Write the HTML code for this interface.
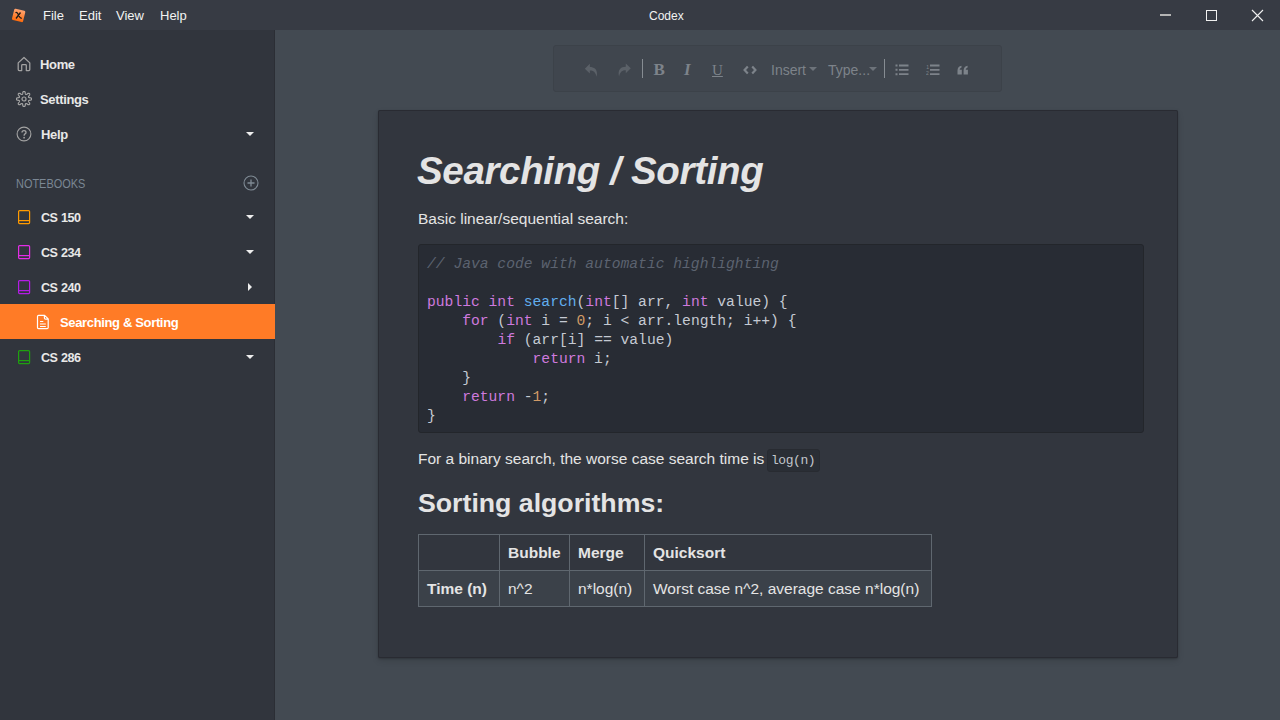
<!DOCTYPE html>
<html><head><meta charset="utf-8">
<style>
*{margin:0;padding:0;box-sizing:border-box}
html,body{width:1280px;height:720px;overflow:hidden;background:#434a52;font-family:"Liberation Sans",sans-serif}
.abs{position:absolute;white-space:nowrap}
#title{position:absolute;left:0;top:0;width:1280px;height:30px;background:#373b44}
#title .m{position:absolute;top:9px;font-size:13px;color:#f2f2f2;line-height:14px}
#side{position:absolute;left:0;top:30px;width:275px;height:690px;background:#31353d;border-right:1px solid #2b2e35}
.si{position:absolute;left:0;width:274px;height:35px}
.si .t{position:absolute;left:40px;top:10px;font-size:13px;font-weight:bold;color:#e8e8e8;line-height:15px}
.si svg{position:absolute}
.caret{position:absolute;left:246px;top:15px;width:0;height:0;border-left:4px solid transparent;border-right:4px solid transparent;border-top:4px solid #eee}
#main{position:absolute;left:275px;top:30px;width:1005px;height:690px;background:#434a52}
#tb{position:absolute;left:553px;top:45px;width:449px;height:47px;background:#40464e;border-radius:3px;border:1px solid #3c4249}
#page{position:absolute;left:378px;top:110px;width:800px;height:548px;background:#32363e;border-radius:2px;box-shadow:inset 0 0 0 1px rgba(30,32,36,.45),0 1px 2px rgba(0,0,0,.2),0 3px 6px rgba(0,0,0,.12)}
.txt{color:#e6e6e6}

.tbt{color:#7d838a;line-height:18px}
.code{white-space:pre !important;font-family:"Liberation Mono",monospace;font-size:14.67px;line-height:19px;color:#c5cad3}
.code .cm{color:#5c6370;font-style:italic}
.code .kw{color:#cf7ade}
.code .fn{color:#61aeee}
.code .nu{color:#d19a66}
.tbl{border-collapse:collapse;color:#e4e4e4;font-size:15.5px}
.tbl td,.tbl th{border:1px solid #5f676f;height:36px;padding:0 8px;text-align:left;white-space:nowrap}
.tbl th{font-weight:bold}
.tbl .r2{background:#3b4149}
.st{font-size:13px;font-weight:bold;color:#e8e8e8;line-height:15px;letter-spacing:-0.35px}
.cs{letter-spacing:-0.5px;font-size:12.6px;word-spacing:0.5px}
</style></head><body>
<div id="title">
  <svg class="abs" style="left:9.8px;top:6.6px" width="17" height="17" viewBox="0 0 17 17">
    <defs><linearGradient id="lg" x1="0" y1="0" x2="0" y2="1"><stop offset="0" stop-color="#ffa370"/><stop offset="1" stop-color="#ff6a0a"/></linearGradient></defs>
    <rect x="2.9" y="2.6" width="11.4" height="11.6" rx="1.3" fill="url(#lg)" transform="rotate(14 8.5 8.5)"/>
    <path d="M5.5 5.8 C6.5 5 7 5.5 8 7 L9.5 9.8 C10.3 11.2 10.8 11.5 11.8 11 M10.5 5.5 L6 11.5" stroke="#1a1a1a" stroke-width="1.3" fill="none"/>
  </svg>
  <div class="m" style="left:43px">File</div>
  <div class="m" style="left:79px">Edit</div>
  <div class="m" style="left:116px">View</div>
  <div class="m" style="left:160px">Help</div>
  <div class="m" style="left:649px;font-size:12px;top:9px">Codex</div>
  <div class="abs" style="left:1160px;top:14px;width:11px;height:2px;background:#b4b4b4"></div>
  <div class="abs" style="left:1206px;top:10px;width:11px;height:11px;border:1px solid #f0f0f0"></div>
  <svg class="abs" style="left:1251px;top:9px" width="13" height="13" viewBox="0 0 13 13"><path d="M1 1L12 12M12 1L1 12" stroke="#f0f0f0" stroke-width="1.1"/></svg>
</div>

<div id="side"></div>

<!-- Home -->
<svg class="abs" style="left:16px;top:56px" width="16" height="16" viewBox="0 0 16 16"><path d="M2.2 13.6 V6.9 L8 1.5 L13.8 6.9 V13.6 Q13.8 14.6 12.8 14.6 H10.3 V9.4 Q10.3 8.6 9.5 8.6 H6.5 Q5.7 8.6 5.7 9.4 V14.6 H3.2 Q2.2 14.6 2.2 13.6 Z" fill="none" stroke="#a3a3a3" stroke-width="1.25" stroke-linejoin="round"/></svg>
<div class="abs st" style="left:40px;top:57px">Home</div>
<!-- Settings -->
<svg class="abs" style="left:16px;top:91px" width="16" height="16" viewBox="0 0 16 16"><path d="M8.00 0.30 L8.20 0.32 L8.40 0.40 L8.59 0.52 L8.77 0.68 L8.93 0.90 L9.08 1.17 L9.20 1.52 L9.25 2.12 L9.33 2.47 L9.41 2.75 L9.49 2.97 L9.57 3.16 L9.66 3.30 L9.76 3.41 L9.88 3.47 L10.00 3.50 L10.15 3.50 L10.31 3.46 L10.50 3.39 L10.72 3.29 L10.97 3.15 L11.27 2.96 L11.73 2.57 L12.06 2.41 L12.36 2.32 L12.63 2.28 L12.88 2.29 L13.09 2.34 L13.29 2.43 L13.44 2.56 L13.57 2.71 L13.66 2.91 L13.71 3.12 L13.72 3.37 L13.68 3.64 L13.59 3.94 L13.43 4.27 L13.04 4.73 L12.85 5.03 L12.71 5.28 L12.61 5.50 L12.54 5.69 L12.50 5.85 L12.50 6.00 L12.53 6.12 L12.59 6.24 L12.70 6.34 L12.84 6.43 L13.03 6.51 L13.25 6.59 L13.53 6.67 L13.88 6.75 L14.48 6.80 L14.83 6.92 L15.10 7.07 L15.32 7.23 L15.48 7.41 L15.60 7.60 L15.68 7.80 L15.70 8.00 L15.68 8.20 L15.60 8.40 L15.48 8.59 L15.32 8.77 L15.10 8.93 L14.83 9.08 L14.48 9.20 L13.88 9.25 L13.53 9.33 L13.25 9.41 L13.03 9.49 L12.84 9.57 L12.70 9.66 L12.59 9.76 L12.53 9.88 L12.50 10.00 L12.50 10.15 L12.54 10.31 L12.61 10.50 L12.71 10.72 L12.85 10.97 L13.04 11.27 L13.43 11.73 L13.59 12.06 L13.68 12.36 L13.72 12.63 L13.71 12.88 L13.66 13.09 L13.57 13.29 L13.44 13.44 L13.29 13.57 L13.09 13.66 L12.88 13.71 L12.63 13.72 L12.36 13.68 L12.06 13.59 L11.73 13.43 L11.27 13.04 L10.97 12.85 L10.72 12.71 L10.50 12.61 L10.31 12.54 L10.15 12.50 L10.00 12.50 L9.88 12.53 L9.76 12.59 L9.66 12.70 L9.57 12.84 L9.49 13.03 L9.41 13.25 L9.33 13.53 L9.25 13.88 L9.20 14.48 L9.08 14.83 L8.93 15.10 L8.77 15.32 L8.59 15.48 L8.40 15.60 L8.20 15.68 L8.00 15.70 L7.80 15.68 L7.60 15.60 L7.41 15.48 L7.23 15.32 L7.07 15.10 L6.92 14.83 L6.80 14.48 L6.75 13.88 L6.67 13.53 L6.59 13.25 L6.51 13.03 L6.43 12.84 L6.34 12.70 L6.24 12.59 L6.12 12.53 L6.00 12.50 L5.85 12.50 L5.69 12.54 L5.50 12.61 L5.28 12.71 L5.03 12.85 L4.73 13.04 L4.27 13.43 L3.94 13.59 L3.64 13.68 L3.37 13.72 L3.12 13.71 L2.91 13.66 L2.71 13.57 L2.56 13.44 L2.43 13.29 L2.34 13.09 L2.29 12.88 L2.28 12.63 L2.32 12.36 L2.41 12.06 L2.57 11.73 L2.96 11.27 L3.15 10.97 L3.29 10.72 L3.39 10.50 L3.46 10.31 L3.50 10.15 L3.50 10.00 L3.47 9.88 L3.41 9.76 L3.30 9.66 L3.16 9.57 L2.97 9.49 L2.75 9.41 L2.47 9.33 L2.12 9.25 L1.52 9.20 L1.17 9.08 L0.90 8.93 L0.68 8.77 L0.52 8.59 L0.40 8.40 L0.32 8.20 L0.30 8.00 L0.32 7.80 L0.40 7.60 L0.52 7.41 L0.68 7.23 L0.90 7.07 L1.17 6.92 L1.52 6.80 L2.12 6.75 L2.47 6.67 L2.75 6.59 L2.97 6.51 L3.16 6.43 L3.30 6.34 L3.41 6.24 L3.47 6.12 L3.50 6.00 L3.50 5.85 L3.46 5.69 L3.39 5.50 L3.29 5.28 L3.15 5.03 L2.96 4.73 L2.57 4.27 L2.41 3.94 L2.32 3.64 L2.28 3.37 L2.29 3.12 L2.34 2.91 L2.43 2.71 L2.56 2.56 L2.71 2.43 L2.91 2.34 L3.12 2.29 L3.37 2.28 L3.64 2.32 L3.94 2.41 L4.27 2.57 L4.73 2.96 L5.03 3.15 L5.28 3.29 L5.50 3.39 L5.69 3.46 L5.85 3.50 L6.00 3.50 L6.12 3.47 L6.24 3.41 L6.34 3.30 L6.43 3.16 L6.51 2.97 L6.59 2.75 L6.67 2.47 L6.75 2.12 L6.80 1.52 L6.92 1.17 L7.07 0.90 L7.23 0.68 L7.41 0.52 L7.60 0.40 L7.80 0.32Z" fill="none" stroke="#a3a3a3" stroke-width="1.2" stroke-linejoin="round"/><circle cx="8" cy="8" r="2" fill="none" stroke="#a3a3a3" stroke-width="1.2"/></svg>
<div class="abs st" style="left:40px;top:92px">Settings</div>
<!-- Help -->
<svg class="abs" style="left:16px;top:126px" width="16" height="16" viewBox="0 0 16 16"><circle cx="8" cy="8" r="6.9" fill="none" stroke="#a3a3a3" stroke-width="1.1"/><path d="M6 6.6 Q6 4.6 8 4.6 Q10 4.6 10 6.4 Q10 7.4 9 7.9 Q8.1 8.4 8.1 9.8" fill="none" stroke="#a3a3a3" stroke-width="1.35"/><circle cx="8.1" cy="11.7" r="0.85" fill="#a3a3a3"/></svg>
<div class="abs st" style="left:41px;top:127px">Help</div>
<div class="caret" style="top:132px"></div>
<!-- NOTEBOOKS -->
<div class="abs" style="left:16px;top:177px;font-size:12.5px;color:#7b8794;line-height:14px;transform:scaleX(0.875);transform-origin:0 0">NOTEBOOKS</div>
<svg class="abs" style="left:243px;top:175px" width="16" height="16" viewBox="0 0 16 16"><circle cx="8" cy="8" r="7" fill="none" stroke="#7f8a94" stroke-width="1.1"/><path d="M8 4.5V11.5M4.5 8H11.5" stroke="#7f8a94" stroke-width="1.3"/></svg>
<svg class="abs" style="left:17px;top:209px" width="14" height="16" viewBox="0 0 14 16"><rect x="1.6" y="1.6" width="11" height="13" rx="1" fill="none" stroke="#ff9a00" stroke-width="1.2"/><path d="M1.6 11.6H12.6" stroke="#ff9a00" stroke-width="1.2"/></svg>
<div class="abs st cs" style="left:41px;top:211px">CS 150</div>
<div class="caret" style="top:215px"></div>
<svg class="abs" style="left:17px;top:244px" width="14" height="16" viewBox="0 0 14 16"><rect x="1.6" y="1.6" width="11" height="13" rx="1" fill="none" stroke="#e32de6" stroke-width="1.2"/><path d="M1.6 11.6H12.6" stroke="#e32de6" stroke-width="1.2"/></svg>
<div class="abs st cs" style="left:41px;top:246px">CS 234</div>
<div class="caret" style="top:250px"></div>
<svg class="abs" style="left:17px;top:279px" width="14" height="16" viewBox="0 0 14 16"><rect x="1.6" y="1.6" width="11" height="13" rx="1" fill="none" stroke="#b41ce6" stroke-width="1.2"/><path d="M1.6 11.6H12.6" stroke="#b41ce6" stroke-width="1.2"/></svg>
<div class="abs st cs" style="left:41px;top:281px">CS 240</div>
<div class="abs" style="left:248px;top:283px;width:0;height:0;border-top:4px solid transparent;border-bottom:4px solid transparent;border-left:4px solid #eee"></div>
<svg class="abs" style="left:17px;top:349px" width="14" height="16" viewBox="0 0 14 16"><rect x="1.6" y="1.6" width="11" height="13" rx="1" fill="none" stroke="#1fa10f" stroke-width="1.2"/><path d="M1.6 11.6H12.6" stroke="#1fa10f" stroke-width="1.2"/></svg>
<div class="abs st cs" style="left:41px;top:351px">CS 286</div>
<div class="caret" style="top:355px"></div>
<div class="abs" style="left:0;top:304px;width:275px;height:35px;background:#ff7b26"></div>
<svg class="abs" style="left:36px;top:314px" width="14" height="16" viewBox="0 0 14 16"><path d="M2.6 1.3 H8.6 L12.2 4.9 V13.6 Q12.2 14.7 11.1 14.7 H2.6 Q1.5 14.7 1.5 13.6 V2.4 Q1.5 1.3 2.6 1.3 Z M8.4 1.5 V3.9 Q8.4 5.1 9.6 5.1 H12" fill="none" stroke="#fff" stroke-width="1.2" stroke-linejoin="round"/><path d="M4 7.5H7.3M4 10H9.8M4 12.5H9.8" stroke="#fff" stroke-width="1.1"/></svg>
<div class="abs st" style="left:60px;top:315px;color:#fff">Searching &amp; Sorting</div>


<div id="tb"></div>

<!-- toolbar icons -->
<svg class="abs" style="left:584px;top:63px" width="14" height="14" viewBox="0 0 13.4 13.4"><path d="M5.6 0.8 L0.8 5.4 L5.6 10 V7.2 C9 7.2 11 8.6 12 13.2 C13.6 6.8 10.4 3.8 5.6 3.8 Z" fill="#5b6168"/></svg>
<svg class="abs" style="left:617px;top:63px" width="14" height="14" viewBox="0 0.3 13.4 13.4"><path d="M8.4 0.8 L13.2 5.4 L8.4 10 V7.2 C5 7.2 3 8.6 2 13.2 C0.4 6.8 3.6 3.8 8.4 3.8 Z" fill="#5b6168"/></svg>
<div class="abs" style="left:642px;top:59px;width:1px;height:19px;background:#868c92"></div>
<div class="abs tbt" style="left:653.5px;top:60.5px;font-family:'Liberation Serif',serif;font-weight:bold;font-size:17px">B</div>
<div class="abs tbt" style="left:684px;top:60.5px;font-family:'Liberation Serif',serif;font-style:italic;font-weight:bold;font-size:17px">I</div>
<div class="abs tbt" style="left:712px;top:61px;font-family:'Liberation Serif',serif;font-size:15px;text-decoration:underline">U</div>
<svg class="abs" style="left:743px;top:65px" width="14" height="10" viewBox="0 0 14 10"><path d="M4.8 1.6 L1.6 5 L4.8 8.4 M9.2 1.6 L12.4 5 L9.2 8.4" fill="none" stroke="#7d838a" stroke-width="2.2"/></svg>
<div class="abs tbt" style="left:771px;top:61px;font-size:14px">Insert</div>
<div class="abs" style="left:809px;top:67px;width:0;height:0;border-left:4px solid transparent;border-right:4px solid transparent;border-top:4px solid #6d737a"></div>
<div class="abs tbt" style="left:828px;top:61px;font-size:14px">Type...</div>
<div class="abs" style="left:869px;top:67px;width:0;height:0;border-left:4px solid transparent;border-right:4px solid transparent;border-top:4px solid #6d737a"></div>
<div class="abs" style="left:884px;top:59px;width:1px;height:19px;background:#868c92"></div>
<svg class="abs" style="left:895px;top:64px" width="14" height="12" viewBox="0 0 14 12"><path d="M0.5 0.5h2v2h-2zM0.5 4.8h2v2h-2zM0.5 9.2h2v2h-2zM4 0.6h9.5v1.8H4zM4 4.9h9.5v1.8H4zM4 9.3h9.5v1.8H4z" fill="#7d838a"/></svg>
<svg class="abs" style="left:926px;top:64px" width="14" height="12" viewBox="0 0 14 12"><text x="0.3" y="4.6" font-size="5" fill="#7d838a" font-family="Liberation Sans">1</text><text x="0" y="11.3" font-size="5" fill="#7d838a" font-family="Liberation Sans">2</text><path d="M4 0.6h9.5v1.8H4zM4 4.9h9.5v1.8H4zM4 9.3h9.5v1.8H4z" fill="#7d838a"/></svg>
<svg class="abs" style="left:957px;top:65px" width="12" height="10" viewBox="0 0 12 10"><path d="M0.5 9.5 V5.5 Q0.5 1.5 4.5 0.8 V2.4 Q2.6 3 2.6 4.8 H4.8 V9.5 Z M6.6 9.5 V5.5 Q6.6 1.5 10.6 0.8 V2.4 Q8.7 3 8.7 4.8 H10.9 V9.5 Z" fill="#7d838a"/></svg>

<div id="page"></div>

<div class="abs" style="left:417px;top:149px;font-size:38.5px;letter-spacing:-0.35px;font-weight:bold;font-style:italic;color:#e4e4e4;line-height:44px">Searching / Sorting</div>
<div class="abs" style="left:418px;top:210px;font-size:15.5px;color:#e4e4e4;line-height:18px">Basic linear/sequential search:</div>
<div class="abs" style="left:418px;top:244px;width:726px;height:189px;background:#282c34;border:1px solid #23262b;border-radius:3px"></div>
<pre class="abs code" style="left:427px;top:255px">
<span class="cm">// Java code with automatic highlighting</span>

<span class="kw">public</span> <span class="kw">int</span> <span class="fn">search</span>(<span class="kw">int</span>[] arr, <span class="kw">int</span> value) {
    <span class="kw">for</span> (<span class="kw">int</span> i = <span class="nu">0</span>; i &lt; arr.length; i++) {
        <span class="kw">if</span> (arr[i] == value)
            <span class="kw">return</span> i;
    }
    <span class="kw">return</span> -<span class="nu">1</span>;
}</pre>
<div class="abs" style="left:418px;top:450px;font-size:15.5px;color:#e4e4e4;line-height:18px">For a binary search, the worse case search time is</div>
<div class="abs" style="left:767px;top:449px;width:53px;height:23px;background:#2a2e35;border:1px solid #282b31;border-radius:3px"></div>
<div class="abs" style="left:771px;top:453px;font-family:'Liberation Mono',monospace;font-size:13px;letter-spacing:-0.45px;color:#c2c6cc;line-height:16px">log(n)</div>
<div class="abs" style="left:418px;top:487px;font-size:26.7px;font-weight:bold;color:#e4e4e4;line-height:32px">Sorting algorithms:</div>
<table class="abs tbl" style="left:418px;top:534px">
<tr><td style="width:81px"></td><th style="width:70px">Bubble</th><th style="width:75px">Merge</th><th style="width:287px">Quicksort</th></tr>
<tr class="r2"><th>Time (n)</th><td>n^2</td><td>n*log(n)</td><td>Worst case n^2, average case n*log(n)</td></tr>
</table>


</body></html>
